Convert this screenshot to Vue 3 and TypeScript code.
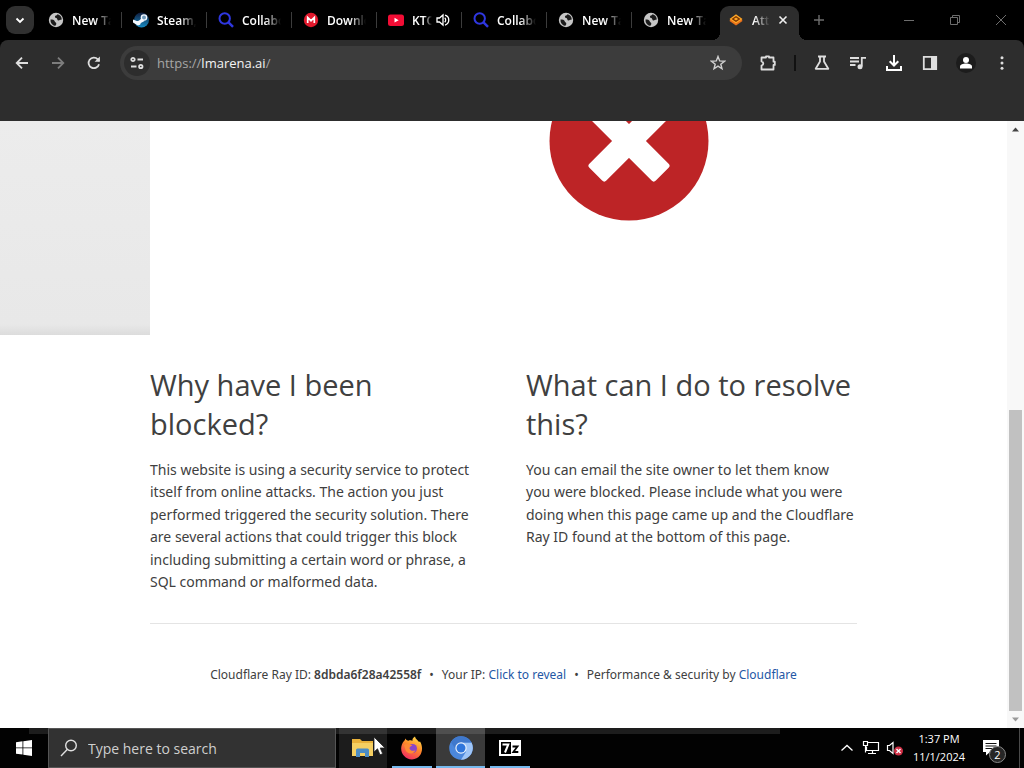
<script setup lang="ts">
interface Tab {
  icon: 'globe' | 'steam' | 'search' | 'mega' | 'youtube' | 'arena'
  title: string
  audio?: boolean
  active?: boolean
}

const tabs: Tab[] = [
  { icon: 'globe', title: 'New Tab' },
  { icon: 'steam', title: 'Steam, T' },
  { icon: 'search', title: 'Collabora' },
  { icon: 'mega', title: 'Downloa' },
  { icon: 'youtube', title: 'KTOE', audio: true },
  { icon: 'search', title: 'Collabora' },
  { icon: 'globe', title: 'New Tab' },
  { icon: 'globe', title: 'New Tab' },
  { icon: 'arena', title: 'Atte', active: true },
]
</script>

<template>
  <div class="desktop">
    <header class="browser">
      <div class="strip">
        <button class="tab-search" aria-label="Search tabs">
          <svg width="12" height="12" viewBox="0 0 12 12"><path d="M2.5 4.5 6 8l3.500-3.500" fill="none" stroke="#fff" stroke-width="1.800" /></svg>
        </button>
        <nav class="tabs" aria-label="Tabs">
          <button v-for="(tab, i) in tabs" :key="i" class="tab" :class="{ active: tab.active, last: i === 7, playing: tab.audio }">
            <svg v-if="tab.icon === 'globe'" class="fav" viewBox="0 0 16 16">
              <circle cx="8" cy="8" r="7.200" fill="#c6c6c6" />
              <path d="M2.500 7.500c2 0 4 .3 4.300 2 .2 1 1.700.8 1.500 2.300-.1 1-.8 1.300-1 2.200A6 6 0 0 1 2.500 7.500ZM9.500 2.300c-.3 1.300-2.400 1-2.600 2.400-.1 1.300 1.300 1 1.900 1.600.8.8.3 2 1.500 2.200 1.300.2 1.400-1 3.500-1A6 6 0 0 0 9.500 2.300Z" fill="#1c1c1c" />
            </svg>
            <svg v-else-if="tab.icon === 'steam'" class="fav" viewBox="0 0 16 16">
              <defs><linearGradient id="steam" x1="0" y1="0" x2="0" y2="1"><stop offset="0" stop-color="#101c3c" /><stop offset="1" stop-color="#168bc4" /></linearGradient></defs>
              <circle cx="8.500" cy="8" r="7.500" fill="url(#steam)" />
              <path d="m0 7.500 5 2 4-3.500 2.500 3-4.500 2.500-2 2L0 10.500Z" fill="#f4f8ff" />
              <circle cx="11" cy="5.500" r="3.300" fill="#f4f8ff" /><circle cx="11" cy="5.500" r="2" fill="#6f99ba" />
              <circle cx="5.500" cy="11" r="2.200" fill="#f4f8ff" />
            </svg>
            <svg v-else-if="tab.icon === 'search'" class="fav" viewBox="0 0 16 16">
              <circle cx="6.700" cy="6.500" r="5.200" fill="none" stroke="#2f37e0" stroke-width="2" />
              <path d="m10.500 10.300 4.500 4.500" stroke="#2f37e0" stroke-width="2.400" />
            </svg>
            <svg v-else-if="tab.icon === 'mega'" class="fav" viewBox="0 0 16 16">
              <circle cx="8" cy="8" r="7.200" fill="#e2192d" />
              <path d="M4.700 11V5.500L8 8.700l3.300-3.200V11" fill="none" stroke="#fff" stroke-width="1.700" />
            </svg>
            <svg v-else-if="tab.icon === 'youtube'" class="fav" viewBox="0 0 16 16">
              <rect x="0" y="2.500" width="16" height="11.500" rx="2.500" fill="#f20d35" />
              <path d="m6.500 5.800 4.200 2.400-4.200 2.400Z" fill="#fff" />
            </svg>
            <svg v-else class="fav" viewBox="0 0 16 16">
              <path d="m1.500 9 6.500 4.500L14.500 9l-1-2h-11Z" fill="#e8701a" />
              <path d="m8 2.300 6.500 4.700L8 11.500 1.500 7Z" fill="#ffa726" />
              <path d="m4.700 7 3.300-2.200L11.300 7 8 9.200Z" fill="none" stroke="#7a3400" stroke-width="1.300" />
            </svg>
            <span class="title">{{ tab.title }}</span>
            <svg v-if="tab.audio" class="audio" viewBox="0 0 14 14">
              <path d="M1 5v4h2.500L7 12V2L3.500 5Z" fill="none" stroke="#fff" stroke-width="1.300" />
              <path d="M8.700 4.800a3 3 0 0 1 0 4.400M9 2a5.200 5.200 0 0 1 0 10" fill="none" stroke="#fff" stroke-width="1.300" />
            </svg>
            <svg v-if="tab.active" class="close" viewBox="0 0 10 10"><path d="m1.500 1.500 7 7m0-7-7 7" stroke="#f0f0f0" stroke-width="1.600" /></svg>
          </button>
        </nav>
        <button class="new-tab" aria-label="New tab">
          <svg width="12" height="12" viewBox="0 0 12 12"><path d="M6 1v10M1 6h10" stroke="#6e6e6e" stroke-width="1.400" /></svg>
        </button>
        <div class="window-controls">
          <button aria-label="Minimize"><svg width="12" height="12" viewBox="0 0 12 12"><path d="M1 6.500h10" stroke="#6e6e6e" /></svg></button>
          <button aria-label="Restore"><svg width="12" height="12" viewBox="0 0 12 12"><path d="M1.500 3.500h7v7h-7ZM3.500 3.500v-2h7v7h-2" fill="none" stroke="#6e6e6e" /></svg></button>
          <button aria-label="Close window"><svg width="12" height="12" viewBox="0 0 12 12"><path d="m1 1 10 10m0-10L1 11" stroke="#6e6e6e" /></svg></button>
        </div>
      </div>

      <div class="toolbar">
        <button class="tool" aria-label="Back"><svg viewBox="0 0 16 16"><path d="M14 8H3m5-5.300L2.700 8 8 13.300" class="line" /></svg></button>
        <button class="tool dim" aria-label="Forward"><svg viewBox="0 0 16 16"><path d="M2 8h11M8 2.700 13.300 8 8 13.300" class="line" /></svg></button>
        <button class="tool" aria-label="Reload"><svg viewBox="0 0 16 16"><path d="M13 9.200A5.300 5.300 0 1 1 11.800 4.300L13.300 6" class="line" /><path d="M13.900 1.500v5.300H8.600Z" class="solid" /></svg></button>
        <div class="omnibox">
          <button class="site" aria-label="View site information">
            <svg viewBox="0 0 16 16"><circle cx="4" cy="4.500" r="1.700" class="line" /><path d="M8.500 4.500H14M2 11.500h5.500" class="line" /><circle cx="11.800" cy="11.500" r="1.700" class="line" /></svg>
          </button>
          <div class="address" role="textbox" aria-label="Address" tabindex="0"><span>https://</span>lmarena.ai<span>/</span></div>
          <button class="star" aria-label="Bookmark this tab"><svg viewBox="0 0 16 16"><path d="m8 1.500 1.700 4.400 4.800.3-3.700 3 1.200 4.600L8 11.200l-4 2.600 1.200-4.600-3.700-3 4.800-.3Z" fill="none" stroke="#d0d0d0" stroke-width="1.400" /></svg></button>
        </div>
        <button class="tool" aria-label="Extensions"><svg class="large" viewBox="0 0 18 18"><path d="M2.500 3.500h4.500V2.300h3v1.200h4.500v4.200h1.300v3.200h-1.300v4.600h-12v-4q1.800-.5 1.800-2t-1.800-2Z" fill="none" stroke="#dedede" stroke-width="1.800" stroke-linejoin="round" /></svg></button>
        <i class="separator"></i>
        <button class="tool" aria-label="Experiments"><svg viewBox="0 0 16 16"><path d="M4 1.500h8M6 1.500v5L1.700 13.800h12.600L10 6.500v-5" class="line" stroke-linejoin="round" /></svg></button>
        <button class="tool" aria-label="Media controls"><svg viewBox="0 0 16 16"><path d="M0 3h9M0 6.500h9M0 10h5.500" class="line" /><path d="M11.800 11.500V2.800H16" class="line" /><circle cx="10" cy="11.800" r="2.500" class="solid" /></svg></button>
        <button class="tool" aria-label="Downloads"><svg class="large" viewBox="0 0 18 18"><path d="M9 1v10M4.700 7.200 9 11.500l4.300-4.300M2 12v4h14v-4" class="line bright" /></svg></button>
        <button class="tool" aria-label="Side panel"><svg viewBox="0 0 16 16"><path d="M1.800 1.800h12.400v12.400H1.800Z" class="line" /><path d="M9 1.500h5.500v13H9Z" class="solid" /></svg></button>
        <button class="tool" aria-label="Profile"><span class="avatar"><svg viewBox="0 0 16 16"><circle cx="8" cy="5" r="3" fill="#fff" /><path d="M2 13.500v-2c0-2 3-3 6-3s6 1 6 3v2Z" fill="#fff" /></svg></span></button>
        <button class="tool" aria-label="Menu"><svg viewBox="0 0 16 16"><circle cx="8" cy="2.700" r="1.500" class="solid" /><circle cx="8" cy="8" r="1.500" class="solid" /><circle cx="8" cy="13.300" r="1.500" class="solid" /></svg></button>
      </div>
    </header>

    <div class="viewport">
      <main class="page">
        <div class="band">
          <div class="shot">
            <svg class="stop" viewBox="0 0 160 100">
              <circle cx="80" cy="20" r="79.500" fill="#bd2426" />
              <g fill="#fff" transform="translate(80 20)">
                <rect x="-47" y="-12" width="94" height="24" rx="3" transform="rotate(45)" />
                <rect x="-47" y="-12" width="94" height="24" rx="3" transform="rotate(-45)" />
              </g>
            </svg>
          </div>
        </div>
        <div class="wrap">
          <div class="columns">
            <section>
              <h2>Why have I been blocked?</h2>
              <p>This website is using a security service to protect itself from online attacks. The action you just performed triggered the security solution. There are several actions that could trigger this block including submitting a certain word or phrase, a SQL command or malformed data.</p>
            </section>
            <section>
              <h2>What can I do to resolve this?</h2>
              <p>You can email the site owner to let them know<br />you were blocked. Please include what you were doing when this page came up and the Cloudflare Ray ID found at the bottom of this page.</p>
            </section>
          </div>
          <footer>
            <span>Cloudflare Ray ID: <strong>8dbda6f28a42558f</strong></span>
            <span class="dot">•</span>
            <span>Your IP: <button class="link">Click to reveal</button></span>
            <span class="dot">•</span>
            <span>Performance &amp; security by <a href="#cloudflare">Cloudflare</a></span>
          </footer>
        </div>
      </main>
      <div class="scrollbar" aria-hidden="true">
        <svg viewBox="0 0 17 17"><path d="m5 10.500 3.500-4 3.500 4Z" fill="#444" /></svg>
        <div class="track"><div class="thumb"></div></div>
        <svg viewBox="0 0 17 17"><path d="m5 6.500 3.500 4 3.500-4Z" fill="#999" /></svg>
      </div>
    </div>

    <footer class="taskbar">
      <button class="start" aria-label="Start"><svg width="16" height="16" viewBox="0 0 16 16"><path d="M0 2.200 6.500 1.300v6.200H0ZM7.300 1.200 16 0v7.500H7.300ZM0 8.300h6.500v6.300L0 13.700ZM7.300 8.300H16V16l-8.700-1.200Z" fill="#fff" /></svg></button>
      <label class="search">
        <svg width="18" height="18" viewBox="0 0 18 18"><circle cx="11" cy="6.500" r="5.300" fill="none" stroke="#e0e0e0" stroke-width="1.400" /><path d="M7.200 10.500 1 17" stroke="#e0e0e0" stroke-width="1.400" /></svg>
        <input type="text" placeholder="Type here to search" aria-label="Type here to search" />
      </label>
      <button class="app hover" aria-label="File Explorer">
        <svg width="24" height="24" viewBox="0 0 24 24"><path d="M1 3h8l2 2h11v15H1Z" fill="#e9b13a" /><path d="M1 7h21v13H1Z" fill="#f5cf62" /><path d="M5 21v-7q0-1.500 1.500-1.500h10q1.500 0 1.500 1.500v7h-4v-4H9v4Z" fill="#4c8cc4" /></svg>
        <svg class="cursor" width="14" height="20" viewBox="0 0 14 20"><path d="M1 1v15l3.500-3.200 2.500 6 2.700-1.100-2.500-5.700H12Z" fill="#fff" stroke="#222" stroke-width=".8" /></svg>
      </button>
      <button class="app open" aria-label="Firefox">
        <svg width="24" height="24" viewBox="0 0 24 24">
          <defs><linearGradient id="fox" x1=".8" y1="0" x2=".3" y2="1"><stop offset="0" stop-color="#ffe14a" /><stop offset=".45" stop-color="#ff8a2a" /><stop offset="1" stop-color="#f22a62" /></linearGradient></defs>
          <path d="M4 5c1-.5 1-2 1.500-2.500.5 1.500 1.500 2 3 2.200C10 4 12 4.500 12.500 5 12 3 13.500 1.500 15 .5c.3 2.500 3 3.500 4 5.500l1-.5c4 6 2.500 17.500-8 18C3 23.500-2.500 13 4 5Z" fill="url(#fox)" />
          <circle cx="12.500" cy="12.500" r="4.500" fill="#8a45c8" /><path d="M4 9c3-2 6-1 8.500.5-2 .5-3 1.500-3 3 1 2.500 4 3 6 1.500-1.500 5-8.500 4-10 0Z" fill="#ff8a35" />
        </svg>
      </button>
      <button class="app open current" aria-label="Chromium">
        <svg width="24" height="24" viewBox="0 0 24 24"><circle cx="12" cy="12" r="11.800" fill="#4b87dc" /><path d="M12 12V6.500h10.500A11.800 11.800 0 0 1 12 23.800l5-8Z" fill="#9fc5f7" /><path d="M2 6A11.800 11.800 0 0 1 22.500 6.500H12L7 14Z" fill="#3f78cc" /><circle cx="12" cy="12" r="5.700" fill="#e9f1fc" /><circle cx="12" cy="12" r="4.500" fill="#2f76dc" /></svg>
      </button>
      <button class="app open" aria-label="7-Zip">
        <svg width="22" height="16" viewBox="0 0 22 16"><path d="M0 0h22v16H0Z" fill="#fff" /><path d="M2 2h10v12H2Z" fill="#000" /><path d="M3.500 4.500h5.800L6 12.500" fill="none" stroke="#fff" stroke-width="2" /><path d="M13.500 6.500h5L14.300 12h5" fill="none" stroke="#000" stroke-width="1.800" /></svg>
      </button>
      <div class="sheen"></div>
      <div class="tray">
        <button aria-label="Show hidden icons"><svg width="14" height="14" viewBox="0 0 14 14"><path d="m1.500 9.500 5.500-5 5.500 5" fill="none" stroke="#fff" stroke-width="1.300" /></svg></button>
        <button aria-label="Network"><svg width="18" height="16" viewBox="0 0 18 16"><path d="M5.500 2.500h11v8H4.500V6.500M10.500 10.500v3M6 13.500h8M1.500 1.500h4v4h-4ZM3.500 5.500v7" fill="none" stroke="#fff" stroke-width="1.200" /></svg></button>
        <button aria-label="Volume"><svg width="18" height="16" viewBox="0 0 18 16"><path d="M1.500 5.500v5h2l3.500 3v-11l-3.500 3Z" fill="none" stroke="#fff" stroke-width="1.200" /><circle cx="12.500" cy="11" r="4.500" fill="#cf2f45" /><path d="m10.500 9 4 4m0-4-4 4" stroke="#fff" stroke-width="1.400" /></svg></button>
        <time class="clock" datetime="2024-11-01T13:37"><span>1:37 PM</span><span>11/1/2024</span></time>
        <button class="notes" aria-label="2 notifications">
          <svg width="16" height="16" viewBox="0 0 16 16"><path d="M0 0h16v12H7l-4 3.500V12H0Z" fill="#fff" /><path d="M2.500 3.500h11M2.500 6h11M2.500 8.500h8" stroke="#111" /></svg>
          <span class="count">2</span>
        </button>
      </div>
    </footer>
  </div>
</template>

<style>
html,
body {
  background: #000;
}
</style>

<style scoped>
* {
  box-sizing: border-box;
}
button {
  margin: 0;
  padding: 0;
  border: 0;
  background: none;
  color: inherit;
  font: inherit;
}
svg {
  display: block;
  flex: none;
}
.desktop {
  display: flex;
  flex-direction: column;
  min-width: 0;
  height: 100vh;
  overflow: hidden;
  font-family: "Open Sans", "Noto Sans", sans-serif;
  background: #000;
}
.strip {
  display: flex;
  height: 40px;
  padding-left: 6px;
}
.tab-search {
  display: grid;
  place-items: center;
  width: 28px;
  height: 28px;
  margin: 6px 3px 0 0;
  border-radius: 9px;
  background: #303030;
}
.tabs {
  display: flex;
  min-width: 0;
}
.tab {
  position: relative;
  display: flex;
  align-items: center;
  gap: 8px;
  flex: 0 1 85px;
  width: 85px;
  min-width: 0;
  height: 34px;
  margin-top: 6px;
  padding: 0 11px 6px;
  font-size: 12px;
  font-weight: 600;
  color: #fff;
}
.tab::after {
  content: "";
  position: absolute;
  right: 0;
  top: 6px;
  width: 1px;
  height: 16px;
  background: #3c3c3c;
}
.tab.last::after {
  display: none;
}
.tab.playing {
  padding-right: 12px;
}
.fav {
  width: 16px;
  height: 16px;
}
.title {
  flex: 1;
  min-width: 0;
  overflow: hidden;
  text-align: left;
  white-space: nowrap;
  mask-image: linear-gradient(to right, #000 calc(100% - 16px), transparent);
}
.playing .title {
  mask-image: linear-gradient(to right, #000 calc(100% - 8px), transparent);
}
.audio {
  width: 14px;
  height: 14px;
  margin-left: -4px;
}
.close {
  width: 10px;
  height: 10px;
}
.tab.active {
  flex-basis: 79px;
  margin-left: 3px;
  margin-right: 4px;
  padding-left: 8px;
  border-radius: 9px 9px 0 0;
  background: #2d2d2d;
}
.tab.active::before,
.tab.active::after {
  content: "";
  position: absolute;
  top: auto;
  bottom: 0;
  width: 8px;
  height: 8px;
}
.tab.active::before {
  left: -8px;
  background: radial-gradient(circle at 0 0, transparent 8px, #2d2d2d 8px);
}
.tab.active::after {
  right: -8px;
  background: radial-gradient(circle at 100% 0, transparent 8px, #2d2d2d 8px);
}
.new-tab {
  display: grid;
  place-items: center;
  width: 32px;
}
.window-controls {
  display: flex;
  margin-left: auto;
}
.window-controls button {
  display: grid;
  place-items: center;
  width: 46px;
}
.toolbar {
  display: flex;
  align-items: flex-start;
  height: 81px;
  padding: 6px 4px 0;
  border-radius: 8px 8px 0 0;
  background: #2d2d2d;
}
.tool {
  display: grid;
  place-items: center;
  flex: none;
  width: 36px;
  height: 34px;
}
.tool svg,
.site svg,
.star svg {
  width: 16px;
  height: 16px;
}
.tool svg.large {
  width: 18px;
  height: 18px;
}
.line {
  fill: none;
  stroke: #dedede;
  stroke-width: 1.800;
}
.bright {
  stroke: #fff;
  stroke-width: 2;
}
.solid {
  fill: #dedede;
}
.dim {
  opacity: 0.450;
}
.omnibox {
  display: flex;
  align-items: center;
  flex: 1;
  min-width: 0;
  height: 34px;
  margin: 0 8px;
  padding: 0 16px 0 4px;
  border-radius: 17px;
  background: #3c3c3c;
}
.site {
  display: grid;
  place-items: center;
  width: 26px;
  height: 26px;
  margin-right: 7px;
  border-radius: 50%;
  background: #2d2d2d;
}
.address {
  flex: 1;
  min-width: 0;
  color: #f4f4f4;
  font-size: 13px;
}
.address span {
  color: #a6a6a6;
}
.separator {
  flex: none;
  width: 2px;
  height: 16px;
  margin: 9px 8px;
  background: #111;
}
.avatar {
  display: grid;
  place-items: center;
  width: 20px;
  height: 20px;
  border-radius: 50%;
  background: #1c1c1c;
}
.viewport {
  display: flex;
  flex: 1;
  min-height: 0;
  background: #fff;
}
.page {
  flex: 1;
  min-width: 0;
  overflow: hidden;
  color: #404040;
}
.band {
  height: 214px;
  padding-left: 150px;
  overflow: hidden;
  background: linear-gradient(#ececec, #e8e8e8 95%, #dcdcdc);
}
.shot {
  display: flex;
  justify-content: center;
  width: 958px;
  height: 100%;
  background: #fff;
}
.stop {
  width: 160px;
  height: 100px;
}
.wrap {
  margin: 0 150px;
}
.columns {
  display: grid;
  grid-template-columns: 1fr 1fr;
  gap: 45px;
  padding: 30px 0;
  border-bottom: 1px solid #e4e4e4;
}
h2 {
  margin: 0 0 16px;
  font-size: 29px;
  font-weight: 400;
  line-height: 39px;
}
p {
  margin: 0;
  font-family: "Noto Sans", "Open Sans", sans-serif;
  font-size: 14px;
  line-height: 1.6;
}
.wrap footer {
  display: flex;
  justify-content: center;
  gap: 8px;
  padding-top: 41px;
  font-family: "Noto Sans", "Open Sans", sans-serif;
  font-size: 12px;
  line-height: 20px;
  white-space: nowrap;
}
strong {
  font-weight: 600;
}
a,
.link {
  color: #2457a5;
  text-decoration: none;
}
.scrollbar {
  display: flex;
  flex-direction: column;
  width: 17px;
  background: #f8f8f8;
}
.scrollbar svg {
  width: 17px;
  height: 17px;
}
.track {
  display: flex;
  flex: 1;
  justify-content: center;
  align-items: flex-end;
}
.thumb {
  width: 13px;
  height: 301px;
  background: #c1c1c1;
}
.taskbar {
  position: relative;
  display: flex;
  flex: none;
  height: 40px;
  color: #fff;
  background: #020202;
}
.sheen {
  position: absolute;
  left: 29px;
  right: 244px;
  top: 0;
  height: 6px;
  background: rgba(255, 255, 255, 0.110);
}
.start {
  display: grid;
  place-items: center;
  width: 48px;
}
.search {
  position: relative;
  z-index: 1;
  display: flex;
  align-items: center;
  gap: 10px;
  width: 288px;
  margin-right: 3px;
  padding-left: 11px;
  border: 1px solid #555;
  background: #323232;
}
.search input {
  flex: 1;
  min-width: 0;
  padding: 0;
  border: 0;
  outline: 0;
  background: none;
  color: #fff;
  font: 14px "Open Sans", "Noto Sans", sans-serif;
}
.search input::placeholder {
  color: #cfcfcf;
  opacity: 1;
}
.app {
  position: relative;
  display: grid;
  place-items: center;
  width: 49px;
}
.hover {
  width: 48px;
  background: #1c1c1c;
}
.cursor {
  position: absolute;
  left: 34px;
  top: 8px;
}
.open::after {
  content: "";
  position: absolute;
  left: 5px;
  right: 4px;
  bottom: 0;
  height: 2px;
  background: #76b9ed;
}
.current {
  background: #3a3a3a;
}
.current::after {
  left: 0;
  right: 0;
}
.tray {
  display: flex;
  align-items: center;
  margin-left: auto;
  margin-right: 4px;
  border-right: 1px solid #4a4a4a;
}
.tray button {
  display: grid;
  place-items: center;
  width: 24px;
  height: 40px;
}
.clock {
  display: grid;
  width: 64px;
  font-size: 11px;
  line-height: 18px;
  text-align: center;
}
.tray .notes {
  position: relative;
  width: 48px;
  padding-right: 8px;
}
.tray .count {
  position: absolute;
  left: 18px;
  bottom: 5px;
  width: 17px;
  height: 17px;
  border: 1px solid #888;
  border-radius: 50%;
  background: #262626;
  font-size: 11px;
  line-height: 15px;
  text-align: center;
}
</style>
